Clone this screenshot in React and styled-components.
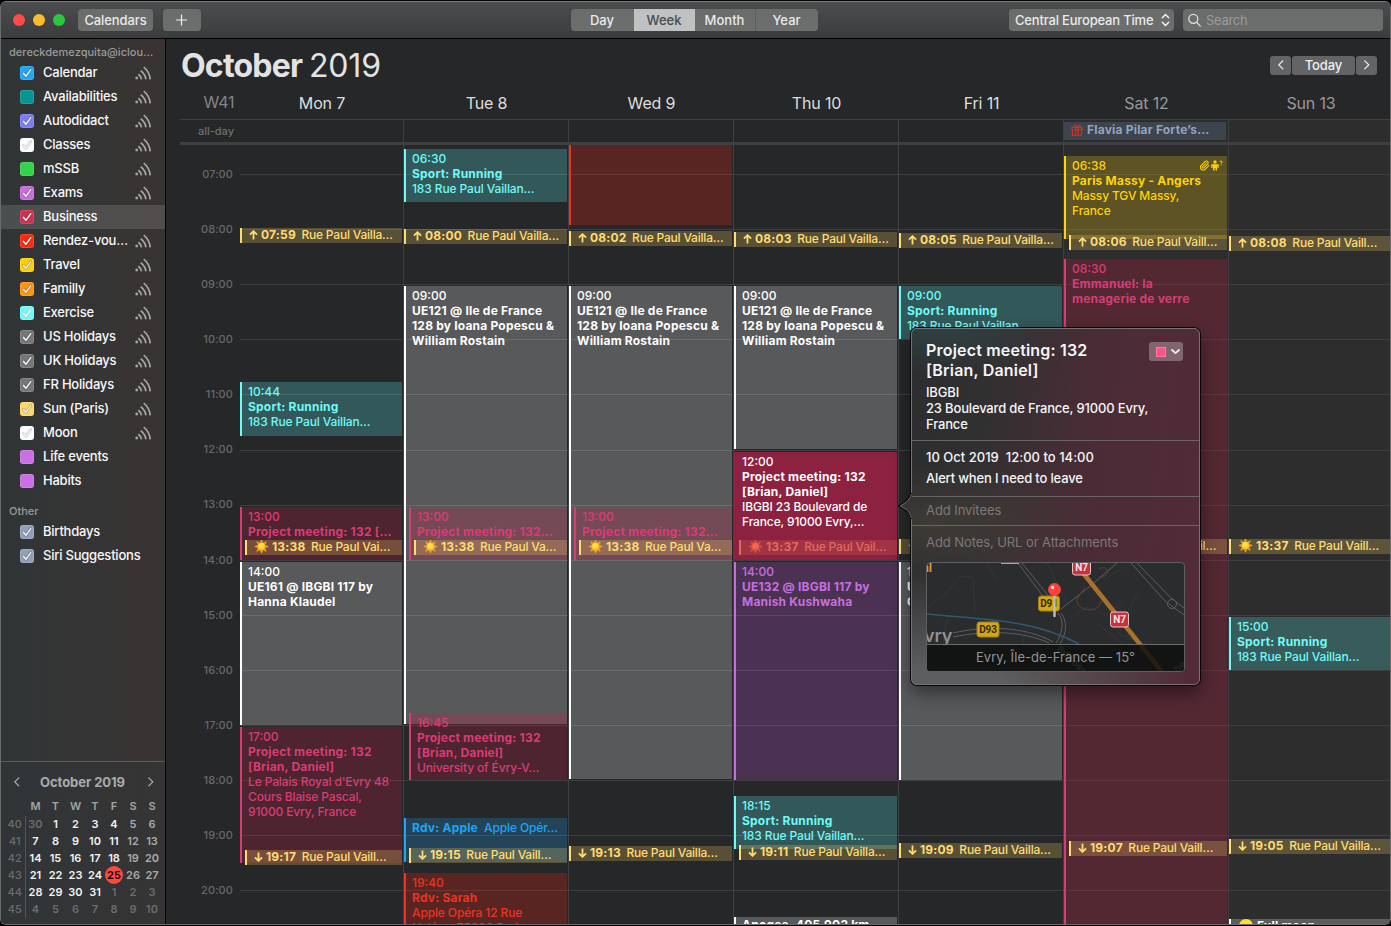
import React from "react";
import styled, { createGlobalStyle, css } from "styled-components";
import { Paperclip } from "lucide-react";

const GlobalStyle = createGlobalStyle`
  * { box-sizing: border-box; }
  html, body { margin: 0; background: #000; }
  body {
    font-family: Inter, "Liberation Sans", sans-serif;
    -webkit-font-smoothing: antialiased;
    overflow: hidden;
  }
`;

/* ---------- palette ---------- */
const tones = {
  sun: { text: "#ffdc72", bar: "#ffdc72", fill: "rgba(255, 214, 100, 0.23)" },
  sport: { text: "#6ffaf6", bar: "#6ffaf6", fill: "rgba(96, 250, 250, 0.23)" },
  white: { text: "#ffffff", bar: "#ffffff", fill: "rgba(255, 255, 255, 0.23)" },
  pink: { text: "#d83c74", bar: "#d83c74", fill: "rgba(212, 24, 75, 0.23)" },
  selected: { text: "#ffffff", bar: "#8f2242", fill: "rgba(143, 33, 65, 0.97)" },
  faded: { text: "#e06a5c", bar: "#e5685a", fill: "rgba(235, 120, 90, 0.22)" },
  red: { text: "#ea3323", bar: "#ea3323", fill: "rgba(255, 35, 12, 0.235)" },
  blue: { text: "#1fa5f3", bar: "#1fa5f3", fill: "rgba(27, 160, 250, 0.23)" },
  purple: { text: "#c66fdf", bar: "#c66fdf", fill: "rgba(205, 85, 220, 0.23)" },
  travel: { text: "#fdd20d", bar: "#fdd20d", fill: "rgba(255, 210, 10, 0.23)" },
};

/* ---------- window ---------- */
const Window = styled.div`
  width: 1391px;
  height: 926px;
  padding: 1px 0 1px;
  background: #000;
`;
const Frame = styled.div`
  display: flex;
  flex-direction: column;
  height: 924px;
  border: 1px solid #6a6b6c;
  border-top-color: #7b7c7d;
  border-radius: 6px;
  overflow: hidden;
  background: #262729;
`;
const TitleBar = styled.header`
  display: grid;
  grid-template-columns: 1fr auto 1fr;
  align-items: center;
  height: 37px;
  flex: none;
  padding: 0 7px 0 4px;
  background: linear-gradient(#4b4c4d, #3b3c3d);
  border-bottom: 1px solid #000;
`;
const BarGroup = styled.div`
  display: flex;
  align-items: center;
  justify-content: ${(p) => (p.$end ? "flex-end" : "flex-start")};
  padding-left: ${(p) => (p.$end ? 0 : 8)}px;
`;
const Light = styled.span`
  width: 12px;
  height: 12px;
  margin-right: 8px;
  border-radius: 50%;
  background: ${(p) => p.$color};
`;
const control = css`
  height: 22px;
  border: 0;
  border-radius: 4px;
  background: linear-gradient(#6a6b6b, #6d6f6e);
  color: #e9eaea;
  font: 500 13px Inter, sans-serif;
  display: flex;
  align-items: center;
`;
const BarButton = styled.button`
  ${control}
  justify-content: center;
  width: ${(p) => p.$w}px;
  padding: 0 0 1px;
  margin-left: ${(p) => p.$ml || 0}px;
  letter-spacing: -0.1px;
`;
const Segments = styled.div`
  display: flex;
  border-radius: 4px;
  overflow: hidden;
  height: 22px;
`;
const Segment = styled.button`
  ${control}
  justify-content: center;
  width: ${(p) => p.$w}px;
  padding: 0;
  border-radius: 0;
  ${(p) => p.$line && "border-left: 1px solid #5c5d5d;"}
  ${(p) => p.$active && "background: #bfc1c3; color: #4a4b4c;"}
`;
const ZoneSelect = styled.button`
  ${control}
  width: 165px;
  padding: 0 4px 0 6px;
  justify-content: space-between;
  letter-spacing: -0.18px;
`;
const SearchField = styled.div`
  ${control}
  width: 200px;
  margin-left: 9px;
  padding: 0 5px;
  gap: 5px;
  color: #9a9b9b;
  font-weight: 400;
  letter-spacing: -0.3px;
`;
const Body = styled.div`
  display: flex;
  flex: 1;
  min-height: 0;
`;

/* ---------- sidebar ---------- */
const Sidebar = styled.aside`
  display: flex;
  flex-direction: column;
  flex: none;
  width: 165px;
  border-right: 1px solid #000;
  background: linear-gradient(90deg, rgba(48, 53, 54, 0.9), rgba(58, 52, 51, 0.9)), #333;
`;
const SideHeading = styled.div`
  height: ${(p) => p.$h}px;
  padding-left: 8px;
  display: flex;
  align-items: center;
  padding-top: ${(p) => p.$pt || 0}px;
  color: #9a9b9b;
  font-size: 11px;
  font-weight: 500;
  letter-spacing: ${(p) => p.$ls || 0}px;
`;
const CalRow = styled.div`
  display: flex;
  align-items: center;
  height: 24px;
  padding: 0 13px 0 19px;
  background: ${(p) => (p.$selected ? "rgba(255,255,255,0.13)" : "none")};
`;
const Check = styled.span`
  display: flex;
  width: 14px;
  height: 14px;
  border-radius: 3px;
  background: ${(p) => p.$color};
  box-shadow: inset 0 0 0 1px rgba(255, 255, 255, 0.12);
`;
const CalName = styled.span`
  flex: 1;
  margin-left: 9px;
  padding-bottom: 2px;
  color: #f8f8f8;
  font-size: 13px;
  font-weight: 500;
  letter-spacing: -0.22px;
  white-space: nowrap;
`;
const MiniCal = styled.section`
  margin-top: auto;
  height: 163px;
  border-top: 1px solid #5a5c5d;
  background: rgba(48, 54, 56, 0.35);
`;
const MiniHead = styled.div`
  display: flex;
  align-items: center;
  justify-content: space-between;
  height: 35px;
  padding: 5px 10px 0 12px;
  color: #a9abab;
`;
const MiniTitle = styled.span`
  margin-right: 3px;
  font-size: 13px;
  font-weight: 700;
  letter-spacing: -0.05px;
`;
const MiniRow = styled.div`
  display: grid;
  grid-template-columns: 24.5px 20px 20px 20px 19px 19px 19px 19px;
  height: 17px;
  align-items: center;
  justify-items: center;
  font-size: 11px;
  font-weight: 600;
  color: #a3a4a5;
  margin-bottom: ${(p) => p.$mb || 0}px;
`;
const MiniDay = styled.span`
  display: flex;
  align-items: center;
  justify-content: center;
  width: 18px;
  height: 18px;
  border-radius: 50%;
  color: ${(p) => p.$color};
  ${(p) => p.$today && "background: #fb4a3f;"}
  ${(p) => p.$week && "width: 25px; height: 17px; padding-left: 4px; border-right: 1px solid #515354; border-radius: 0; font-weight: 500;"}
`;

/* ---------- week view ---------- */
const Main = styled.main`
  display: flex;
  flex-direction: column;
  flex: 1;
  min-width: 0;
  padding-left: 14px;
`;
const TitleRow = styled.div`
  display: flex;
  align-items: flex-start;
  justify-content: space-between;
  height: 48px;
  padding: 7px 13px 0 1px;
`;
const MonthTitle = styled.h1`
  margin: 0;
  color: #e2e3e3;
  font-size: 32px;
  line-height: 40px;
  font-weight: 700;
  letter-spacing: -0.8px;
`;
const Year = styled.span`
  font-weight: 370;
  letter-spacing: -0.15px;
`;
const NavGroup = styled.div`
  display: flex;
  gap: 1px;
  margin-top: 10px;
`;
const NavButton = styled.button`
  display: flex;
  align-items: center;
  justify-content: center;
  width: ${(p) => p.$w}px;
  height: 19px;
  padding: 0 0 1px;
  border: 0;
  border-radius: 3px;
  background: #636466;
  color: #ecedee;
  font: 500 13px Inter, sans-serif;
  letter-spacing: -0.1px;
`;
const weekColumns = css`
  display: grid;
  grid-template-columns: 60px 163px repeat(5, 165px) 162px;
`;
const DayHeads = styled.div`
  ${weekColumns}
  height: 32px;
  align-items: center;
  flex: none;
`;
const DayHead = styled.div`
  text-align: center;
  font-size: 16px;
  letter-spacing: -0.15px;
  color: ${(p) => (p.$dim ? "#98999a" : "#dddede")};
  padding-left: ${(p) => p.$pad}px;
`;
const WeekNo = styled.div`
  padding: 0 6px 2px 0;
  text-align: right;
  font-size: 16px;
  letter-spacing: -0.4px;
  color: #838485;
`;
const AllDay = styled.div`
  ${weekColumns}
  flex: none;
  height: 26px;
  border-top: 1px solid #3e3f41;
  border-bottom: 3px solid #3e3f41;
`;
const AllDayLabel = styled.div`
  padding: 0 6px 0 0;
  text-align: right;
  color: #6e6f71;
  font-size: 11px;
  line-height: 22px;
  font-weight: 500;
`;
const AllDayCell = styled.div`
  padding-top: 2px;
  ${(p) => !p.$first && "border-left: 1px solid #3e3f41;"}
  ${(p) => p.$weekend && "background: #2d2d2d;"}
`;
const Birthday = styled.div`
  display: flex;
  align-items: center;
  gap: 4px;
  height: 18px;
  margin-right: 2px;
  padding: 0 0 3px 7px;
  background: #3e444d;
  color: #93a3bf;
  font-size: 12px;
  font-weight: 700;
  letter-spacing: 0.2px;
  white-space: nowrap;
`;
const WeekGrid = styled.div`
  ${weekColumns}
  flex: 1;
  min-height: 0;
  overflow: hidden;
`;
const HourRail = styled.div`
  display: grid;
  grid-template-rows: repeat(779, 1px);
`;
const HourLabel = styled.span`
  grid-row: ${(p) => p.$y - 7} / span 15;
  grid-column: 1;
  padding-right: 7px;
  text-align: right;
  font-size: 11px;
  line-height: 15px;
  font-weight: 450;
  color: #68696b;
  letter-spacing: 0.1px;
`;
const Day = styled.div`
  display: grid;
  grid-template-columns: minmax(0, 1fr);
  grid-template-rows: repeat(779, 1px);
  ${(p) => !p.$first && "border-left: 1px solid #3e3f41;"}
  ${(p) => p.$weekend && "background: #2d2d2d;"}
`;
const HourLine = styled.i`
  grid-column: 1;
  grid-row: ${(p) => p.$y + 1};
  background: #3e3f41;
`;
const Block = styled.article`
  grid-column: 1;
  grid-row: ${(p) => p.$from + 1} / ${(p) => p.$to + 1};
  margin-left: ${(p) => p.$indent * 5}px;
  margin-right: ${(p) => (p.$last ? 0 : 1)}px;
  padding: ${(p) => (p.$tight ? 0 : 2)}px 0 0 6px;
  border-left: 2px solid ${(p) => tones[p.$tone].bar};
  background: ${(p) => tones[p.$tone].fill};
  background-clip: padding-box;
  color: ${(p) => tones[p.$tone].text};
  font-size: 12px;
  font-weight: 450;
  line-height: 15px;
  letter-spacing: -0.13px;
  overflow: hidden;
  white-space: pre;
`;
const Line = styled.div``;
const Strong = styled.b`
  font-weight: 700;
  letter-spacing: 0.2px;
`;
const TimeLine = styled.div`
  display: flex;
  justify-content: space-between;
  padding-right: 4px;
  letter-spacing: 0;
`;
const Marks = styled.span`
  display: flex;
  align-items: center;
  gap: 1px;
`;
const MoonLine = styled.div`
  display: flex;
  align-items: flex-start;
  gap: 4px;
  margin-top: -1px;
`;
const SunBlock = styled(Block)`
  display: flex;
  align-items: center;
  padding: 0 0 2px 7px;
  letter-spacing: -0.2px;
`;
const SunTime = styled.b`
  margin: 0 5.5px 0 3px;
  font-weight: 700;
  letter-spacing: 0.2px;
`;

/* ---------- popover ---------- */
const Popover = styled.section`
  position: absolute;
  left: 911px;
  top: 328px;
  width: 289px;
  height: 357px;
  border: 1px solid #747275;
  border-radius: 6px;
  color: #f5f5f5;
  box-shadow: 0 0 0 1px #08080a, 0 8px 18px rgba(0, 0, 0, 0.45);
  background:
    radial-gradient(130px 45px at 25px 0, rgba(48, 72, 74, 0.7), rgba(48, 72, 74, 0) 100%),
    radial-gradient(240px 130px at 40px 370px, #5d5e5f 25%, rgba(88, 88, 88, 0) 100%),
    radial-gradient(170px 60px at 20px 195px, rgba(72, 66, 58, 0.6), rgba(72, 66, 58, 0) 100%),
    linear-gradient(97deg, #2c2d2f 0%, #313031 25%, #4a2c36 58%, #532b38 100%);
`;
const Tail = styled.svg`
  position: absolute;
  left: -14px;
  top: 164px;
`;
const PopSection = styled.div`
  height: ${(p) => p.$h}px;
  padding: ${(p) => p.$p};
  ${(p) => p.$line && "border-bottom: 1px solid #6b6466;"}
  font-size: 13px;
  line-height: 16px;
  font-weight: 500;
  letter-spacing: -0.17px;
`;
const PopTitleRow = styled.div`
  display: flex;
  justify-content: space-between;
  align-items: flex-start;
  margin-bottom: 4px;
`;
const PopTitle = styled.h2`
  margin: 0;
  font-size: 16px;
  line-height: 20px;
  font-weight: 600;
  letter-spacing: 0.19px;
`;
const ColorPick = styled.button`
  display: flex;
  align-items: center;
  gap: 5px;
  width: 34px;
  height: 19px;
  margin: 2px 1px 0 0;
  padding: 0 0 0 7px;
  border: 0;
  border-radius: 3px;
  background: #81666f;
`;
const Swatch = styled.span`
  width: 10px;
  height: 10px;
  background: #ff5287;
  border: 1px solid #ff7aa3;
`;
const PopDate = styled.div`
  letter-spacing: 0.02px;
`;
const PopAlert = styled.div`
  margin-top: 5px;
`;
const Hint = styled.div`
  color: #7d7777;
  font-weight: 400;
  letter-spacing: -0.08px;
`;
const MapCard = styled.figure`
  position: relative;
  display: flex;
  flex-direction: column;
  justify-content: flex-end;
  width: 259px;
  height: 110px;
  margin: 12px 0 0;
  border: 1px solid #5d5f60;
  border-radius: 4px;
  overflow: hidden;
  background: #2a2c2e;
`;
const MapArt = styled.svg`
  position: absolute;
  inset: 0;
`;
const MapCaption = styled.figcaption`
  position: relative;
  height: 27px;
  border-top: 1px solid #6a6b6b;
  background: rgba(14, 14, 14, 0.84);
  color: #929393;
  text-align: center;
  font-size: 13px;
  font-weight: 400;
  line-height: 25px;
  letter-spacing: 0.06px;
`;

/* ---------- icons ---------- */
const Chevron = ({ d = "left", size = 8, color = "currentColor", w = 1.5 }) => {
  const paths = { left: "M6.5 1 2 5.5 6.5 10", right: "M2 1 6.5 5.5 2 10", down: "M1 4 4.5 7.2 8 4" };
  return (
    <svg width={size} height={size * 1.22} viewBox="0 0 9 11" fill="none" stroke={color} strokeWidth={w} strokeLinecap="round" strokeLinejoin="round">
      <path d={paths[d]} />
    </svg>
  );
};
const Tick = ({ light }) => (
  <svg width="14" height="14" viewBox="0 0 14 14" fill="none" strokeLinecap="round" strokeLinejoin="round">
    <path d="M3.4 7.4 6 10.2 10.8 3.6" stroke={light ? "#bdbdbd" : "rgba(0,0,0,.35)"} strokeWidth="2.6" />
    <path d="M3.4 7.4 6 10.2 10.8 3.6" stroke="#f3f3f3" strokeWidth="1.6" />
  </svg>
);
const Broadcast = () => (
  <svg width="17" height="14" viewBox="0 0 17 14" fill="none" stroke="#a3a4a4" strokeWidth="1.7">
    <circle cx="1.7" cy="12" r="1.4" fill="#a3a4a4" stroke="none" />
    <path d="M3.300 8.300A7.500 7.500 0 0 1 6.500 13.400M5.800 4.700A13 13 0 0 1 10.900 13.400M8.800 1.200A18 18 0 0 1 15.200 13.400" />
  </svg>
);
const Arrow = ({ up }) => (
  <svg width="9" height="10" viewBox="0 0 9 10" fill="none" stroke="currentColor" strokeWidth="1.8">
    {up ? <path d="M4.5 9.6V1.6M.9 4.7 4.5 1.2 8.1 4.7" /> : <path d="M4.5.4V8.4M.9 5.3 4.5 8.8 8.1 5.3" />}
  </svg>
);
const SunIcon = ({ faded }) => (
  <svg width="15" height="15" viewBox="-7.5 -7.5 15 15">
    {[0, 45, 90, 135, 180, 225, 270, 315].map((a) => (
      <path key={a} d="M-1.500-4.600 0-7.300 1.500-4.600z" fill={faded ? "#c5593c" : "#f0a128"} transform={`rotate(${a})`} />
    ))}
    <circle r="4.300" fill={faded ? "#ee5548" : "#ffc021"} />
    <circle r="2.600" cx="-.3" cy="-.8" fill={faded ? "#f06a55" : "#ffe04a"} />
  </svg>
);
const Gift = () => (
  <svg width="12" height="12" viewBox="0 0 12 12" fill="none" stroke="#e02c20" strokeWidth="1.1">
    <path d="M.8 3.500h10.400v2.300H.8zM1.500 5.800h9v5.500h-9zM4.900 3.500v7.800M7.100 3.500v7.800M6 3.400C4.600 0 2.200.8 3.200 3.200M6 3.400C7.400 0 9.800.8 8.800 3.200" />
  </svg>
);
const Person = () => (
  <svg width="12" height="11" viewBox="0 0 12 11" fill="currentColor">
    <circle cx="4" cy="2" r="1.700" />
    <path d="M.3 4.300H7.700V8H6.400V6.200H6V10.500H4.500V8H3.500V10.500H2V6.200H1.600V8H.3z" />
    <path d="M8.800 2C8.800.6 11.200.6 11.200 2 11.200 2.900 10 2.900 10 4M10 4.600v.9" fill="none" stroke="currentColor" strokeWidth=".9" />
  </svg>
);

/* ---------- data ---------- */
const calendars = [
  ["Calendar", "#1fa7f8", 1, 1],
  ["Availabilities", "#089494", 0, 1],
  ["Autodidact", "#7c7df3", 1, 1],
  ["Classes", "#fcfcfc", 2, 1],
  ["mSSB", "#35d24c", 0, 1],
  ["Exams", "#c86ddd", 1, 1],
  ["Business", "#cf304f", 1, 0],
  ["Rendez-vou…", "#fc2b0d", 1, 1],
  ["Travel", "#fdd00b", 1, 1],
  ["Familly", "#fd950d", 1, 1],
  ["Exercise", "#6efbfc", 2, 1],
  ["US Holidays", "#767778", 1, 1],
  ["UK Holidays", "#767778", 1, 1],
  ["FR Holidays", "#767778", 1, 1],
  ["Sun (Paris)", "#fdd76b", 1, 1],
  ["Moon", "#fcfcfc", 2, 1],
  ["Life events", "#cb70e2", 0, 0],
  ["Habits", "#cb70e2", 0, 0],
];
const others = [
  ["Birthdays", "#90a0bb", 1, 0],
  ["Siri Suggestions", "#90a0bb", 1, 0],
];

/* Top edge of the visible time range, in page pixels. */
const TOP = 145;
const hours = [174, 229, 284, 339, 394, 450, 505, 560, 615, 670, 725, 780, 835, 890].map((y, i) => ({
  y: y - TOP,
  labelY: y - TOP - (i === 5 || i === 6 ? 1 : 0),
  label: `${String(i + 7).padStart(2, "0")}:00`,
}));

const ev = (tone, from, to, time, title = [], place = [], indent = 0, extra = {}) => ({
  tone, from: from - TOP, to: to - TOP, time, title, place, indent, ...extra,
});
const sun = (from, icon, time, place, indent = 0, tone = "sun") => ({
  tone, from: from - TOP, to: from + 15 - TOP, icon, time, place, indent, isSun: true,
});
const sport = (from, to, time) => ev("sport", from, to, time, ["Sport: Running"], ["183 Rue Paul Vaillan…"]);
const lecture = (to) => ev("white", 286, to, "09:00", ["UE121 @ Ile de France", "128 by Ioana Popescu &", "William Rostain"]);

const days = [
  {
    name: "Mon 7",
    events: [
      sun(228, "up", "07:59", "Rue Paul Vailla…"),
      sport(382, 436, "10:44"),
      ev("pink", 507, 560, "13:00", ["Project meeting: 132 […"]),
      sun(540, "sun", "13:38", "Rue Paul Vai…", 1),
      ev("white", 562, 725, "14:00", ["UE161 @ IBGBI 117 by", "Hanna Klaudel"]),
      ev("pink", 727, 863, "17:00", ["Project meeting: 132", "[Brian, Daniel]"], ["Le Palais Royal d'Evry 48", "Cours Blaise Pascal,", "91000 Evry, France"]),
      sun(850, "down", "19:17", "Rue Paul Vaill…", 1),
    ],
  },
  {
    name: "Tue 8",
    events: [
      sport(149, 202, "06:30"),
      sun(229, "up", "08:00", "Rue Paul Vailla…"),
      lecture(724),
      ev("pink", 507, 560, "13:00", ["Project meeting: 132…"], [], 1),
      sun(540, "sun", "13:38", "Rue Paul Va…", 2),
      ev("pink", 713, 780, "16:45", ["Project meeting: 132", "[Brian, Daniel]"], ["University of Évry-V…"], 1),
      ev("blue", 818, 862, null, [], [], 0, { inline: ["Rdv: Apple", "Apple Opér…"] }),
      sun(848, "down", "19:15", "Rue Paul Vaill…", 1),
      ev("red", 873, 924, "19:40", ["Rdv: Sarah"], ["Apple Opéra 12 Rue", "Halévy, 75009 Paris,"]),
    ],
  },
  {
    name: "Wed 9",
    events: [
      ev("red", 145, 225, null),
      sun(231, "up", "08:02", "Rue Paul Vailla…"),
      lecture(779),
      ev("pink", 507, 560, "13:00", ["Project meeting: 132…"], [], 1),
      sun(540, "sun", "13:38", "Rue Paul Va…", 2),
      sun(846, "down", "19:13", "Rue Paul Vailla…"),
    ],
  },
  {
    name: "Thu 10",
    events: [
      sun(232, "up", "08:03", "Rue Paul Vailla…"),
      lecture(449),
      ev("selected", 452, 560, "12:00", ["Project meeting: 132", "[Brian, Daniel]"], ["IBGBI 23 Boulevard de", "France, 91000 Evry,…"]),
      sun(540, "sun", "13:37", "Rue Paul Vail…", 1, "faded"),
      ev("purple", 562, 780, "14:00", ["UE132 @ IBGBI 117 by", "Manish Kushwaha"]),
      sport(796, 849, "18:15"),
      sun(845, "down", "19:11", "Rue Paul Vailla…", 1),
      ev("white", 917, 924, null, ["Apogee, 405,902 km"], [], 0, { tight: true }),
    ],
  },
  {
    name: "Fri 11",
    events: [
      sun(233, "up", "08:05", "Rue Paul Vailla…"),
      sport(286, 339, "09:00"),
      sun(539, "sun", "13:37", "Rue Paul Vail…"),
      ev("white", 562, 780, "14:00", ["UE132 @ IBGBI 117", "Cours"]),
      sun(843, "down", "19:09", "Rue Paul Vailla…"),
    ],
  },
  {
    name: "Sat 12",
    weekend: true,
    events: [
      ev("travel", 156, 239, "06:38", ["Paris Massy - Angers"], ["Massy TGV Massy,", "France"], 0, { marks: true }),
      sun(235, "up", "08:06", "Rue Paul Vaill…", 1),
      ev("pink", 259, 924, "08:30", ["Emmanuel: la", "menagerie de verre"]),
      sun(539, "sun", "13:37", "Rue Paul Vail…", 1),
      sun(841, "down", "19:07", "Rue Paul Vaill…", 1),
    ],
  },
  {
    name: "Sun 13",
    weekend: true,
    events: [
      sun(236, "up", "08:08", "Rue Paul Vaill…"),
      sun(539, "sun", "13:37", "Rue Paul Vaill…"),
      sport(617, 670, "15:00"),
      sun(839, "down", "19:05", "Rue Paul Vailla…"),
      ev("white", 919, 924, null, [], [], 0, { moon: true, tight: true }),
    ],
  },
];

const weeks = [
  [40, 30, 1, 2, 3, 4, 5, 6],
  [41, 7, 8, 9, 10, 11, 12, 13],
  [42, 14, 15, 16, 17, 18, 19, 20],
  [43, 21, 22, 23, 24, 25, 26, 27],
  [44, 28, 29, 30, 31, 1, 2, 3],
  [45, 4, 5, 6, 7, 8, 9, 10],
];
const miniColor = (r, c) => {
  const n = weeks[r][c];
  if (c === 0 || (r === 0 && n === 30) || (r >= 4 && n < 11)) return "#6b6d6e";
  if (n === 25) return "#180000";
  return c > 5 ? "#a9abab" : "#f2f2f2";
};

/* ---------- parts ---------- */
function CalendarRow({ item: [name, color, tick, feed] }) {
  return (
    <CalRow $selected={name === "Business"}>
      <Check $color={color}>{tick > 0 && <Tick light={tick === 2} />}</Check>
      <CalName>{name}</CalName>
      {feed > 0 && <Broadcast />}
    </CalRow>
  );
}

function Event({ e, last }) {
  const box = { $tone: e.tone, $from: e.from, $to: e.to, $indent: e.indent, $last: last, $tight: e.tight };
  if (e.isSun) {
    return (
      <SunBlock {...box}>
        {e.icon === "sun" ? <SunIcon faded={e.tone === "faded"} /> : <Arrow up={e.icon === "up"} />}
        <SunTime>{e.time}</SunTime>
        {e.place}
      </SunBlock>
    );
  }
  return (
    <Block {...box}>
      {e.time && (
        <TimeLine>
          {e.time}
          {e.marks && (
            <Marks>
              <Paperclip size={11} strokeWidth={2.3} />
              <Person />
            </Marks>
          )}
        </TimeLine>
      )}
      {e.title.map((t) => (
        <Line key={t}>
          <Strong>{t}</Strong>
        </Line>
      ))}
      {e.place.map((t) => (
        <Line key={t}>{t}</Line>
      ))}
      {e.inline && (
        <Line>
          <Strong>{e.inline[0]}</Strong>
          {"  " + e.inline[1]}
        </Line>
      )}
      {e.moon && (
        <MoonLine>
          <svg width="16" height="15" viewBox="0 0 16 15">
            <circle cx="9" cy="8" r="7" fill="#ffdf2e" />
          </svg>
          <Strong>Full moon</Strong>
        </MoonLine>
      )}
    </Block>
  );
}

const Shield = ({ x, y, label, kind, w }) => (
  <g transform={`translate(${x} ${y})`}>
    <rect width={w} height="15" rx="2.500" fill={kind === "red" ? "#c9303c" : "#d3a616"} stroke={kind === "red" ? "#e8c7ca" : "#a37f0e"} strokeWidth="1" />
    <text x={w / 2} y="11" textAnchor="middle" fontSize="10" fontWeight="700" fontFamily="Roboto, sans-serif" fill={kind === "red" ? "#f3e4e5" : "#33290a"}>
      {label}
    </text>
  </g>
);

function TownMap() {
  return (
    <MapArt width="257" height="108" viewBox="0 0 257 108" fill="none">
      <g stroke="#34373a" strokeWidth="1">
        <path d="M0 44 17 32 33 14H46L48 50M20 56 12 108M60 0 70 18M120 0 140 40M148 52 160 44 178 52 196 38M170 60 220 100M210 30 190 70 240 90M176 18 196 4M100 60 90 108" />
      </g>
      <g stroke="#5c5f62" strokeWidth="1">
        <path d="M91 0 121 40M95 0 124 36M134 46 162 24 190 0M131 50C138 58 135 72 129 80M134 50C142 60 138 74 132 82M204 0 238 38 257 52M210 0 243 34 257 45M26 70C60 62 100 64 126 79M26 74C60 67 96 68 122 80" />
        <circle cx="245" cy="41" r="4.500" />
      </g>
      <path d="M150 36C148 48 172 52 174 38M158 24 150 36M172 6C182 0 184 16 172 14" stroke="#693d33" />
      <path d="M0 51C60 57 104 56 152 81" stroke="#315873" strokeWidth="1.500" />
      <path d="M156 10 236 110" stroke="#a9712f" strokeWidth="4.500" />
      <path d="M74-.5H92" stroke="#e0a040" strokeWidth="3" />
      <text x="-5" y="9" fontSize="12" fontWeight="700" fontFamily="Inter" fill="#d99a35">al</text>
      <text x="-3" y="79" fontSize="18" fontWeight="600" fontFamily="Inter" fill="#8f9192">vry</text>
      <text x="129" y="87" fontSize="10" fontWeight="700" fontFamily="Inter" fill="#8a8b8b" transform="rotate(42 129 87)">Bd Foss</text>
      <text x="250" y="110" fontSize="10" fontWeight="700" fontFamily="Inter" fill="#8a8b8b" transform="rotate(-40 250 110)">he</text>
      <Shield x={145.500} y={-3} w={18} label="N7" kind="red" />
      <Shield x={183.500} y={49} w={18} label="N7" kind="red" />
      <Shield x={50} y={59} w={22} label="D93" />
      <Shield x={111.500} y={33} w={21} label="D91" />
      <path d="M127.500 33V53" stroke="#b9babb" strokeWidth="2.500" strokeLinecap="round" />
      <circle cx="127.500" cy="26.500" r="6.500" fill="#ff4238" />
      <circle cx="125.500" cy="24.500" r="1.700" fill="#ffd6d2" />
    </MapArt>
  );
}

function EventPopover() {
  return (
    <Popover>
      <Tail width="14" height="26" viewBox="0 0 14 26">
        <path d="M14 0C12 4 11 6 8 8.500L1 13 8 17C11 19.500 12 22 14 26z" fill="#383634" />
        <path d="M13.500 0C12 4 11 6 8 8.500L1 13 8 17C11 19.500 12 22 13.500 26" fill="none" stroke="#0a0a0a" strokeWidth="2" />
        <path d="M13.500 1C12 5 11 6.500 8.500 9L2.300 13 8.500 16.500C11 19 12 21 13.500 25" fill="none" stroke="#747275" strokeWidth="1" />
      </Tail>
      <PopSection $h={112} $line $p="11px 15px 0 14px">
        <PopTitleRow>
          <PopTitle>
            Project meeting: 132
            <br />
            [Brian, Daniel]
          </PopTitle>
          <ColorPick>
            <Swatch />
            <Chevron d="down" size={9} color="#f3eef0" w={1.8} />
          </ColorPick>
        </PopTitleRow>
        IBGBI
        <br />
        23 Boulevard de France, 91000 Evry,
        <br />
        France
      </PopSection>
      <PopSection $h={56} $line $p="8px 14px 0">
        <PopDate>10 Oct 2019&nbsp; 12:00 to 14:00</PopDate>
        <PopAlert>Alert when I need to leave</PopAlert>
      </PopSection>
      <PopSection $h={29} $line $p="5px 14px 0">
        <Hint>Add Invitees</Hint>
      </PopSection>
      <PopSection $h={150} $p="8px 14px 0">
        <Hint>Add Notes, URL or Attachments</Hint>
        <MapCard>
          <TownMap />
          <MapCaption>Evry, Île-de-France — 15°</MapCaption>
        </MapCard>
      </PopSection>
    </Popover>
  );
}

export default function App() {
  return (
    <>
      <GlobalStyle />
      <Window>
        <Frame>
          <TitleBar>
            <BarGroup>
              <Light $color="#fc4b48" />
              <Light $color="#fdbc2f" />
              <Light $color="#2ac840" />
              <BarButton $w={75} $ml={5}>Calendars</BarButton>
              <BarButton $w={38} $ml={10}>
                <svg width="12" height="12" viewBox="0 0 12 12" stroke="#eee" strokeWidth="1.200">
                  <path d="M5.500 .5v11M0 6h11" />
                </svg>
              </BarButton>
            </BarGroup>
            <Segments>
              <Segment $w={63}>Day</Segment>
              <Segment $w={61} $active>Week</Segment>
              <Segment $w={60}>Month</Segment>
              <Segment $w={63} $line>Year</Segment>
            </Segments>
            <BarGroup $end>
              <ZoneSelect>
                Central European Time
                <svg width="9" height="14" viewBox="0 0 9 14" fill="none" stroke="#f0f0f0" strokeWidth="1.500" strokeLinecap="round" strokeLinejoin="round">
                  <path d="M1.300 4.700 4.500 1.500 7.700 4.700M1.300 9.300 4.500 12.500 7.700 9.300" />
                </svg>
              </ZoneSelect>
              <SearchField>
                <svg width="13" height="14" viewBox="0 0 13 14" fill="none" stroke="#dededf" strokeWidth="1.300" strokeLinecap="round">
                  <circle cx="5.300" cy="5.800" r="4.500" />
                  <path d="m8.600 9.200 3.700 3.900" />
                </svg>
                Search
              </SearchField>
            </BarGroup>
          </TitleBar>
          <Body>
            <Sidebar>
              <SideHeading $h={22} $pt={4} $ls={0.03}>dereckdemezquita@iclou…</SideHeading>
              {calendars.map((c) => (
                <CalendarRow key={c[0]} item={c} />
              ))}
              <SideHeading $h={27} $pt={9}>Other</SideHeading>
              {others.map((c) => (
                <CalendarRow key={c[0]} item={c} />
              ))}
              <MiniCal>
                <MiniHead>
                  <Chevron size={8} />
                  <MiniTitle>October 2019</MiniTitle>
                  <Chevron d="right" size={8} />
                </MiniHead>
                <MiniRow $mb={1}>
                  <span />
                  {["M", "T", "W", "T", "F", "S", "S"].map((d, i) => (
                    <span key={i}>{d}</span>
                  ))}
                </MiniRow>
                {weeks.map((w, r) => (
                  <MiniRow key={w[0]}>
                    {w.map((n, c) => (
                      <MiniDay key={c} $week={c === 0} $today={n === 25} $color={miniColor(r, c)}>
                        {n}
                      </MiniDay>
                    ))}
                  </MiniRow>
                ))}
              </MiniCal>
            </Sidebar>
            <Main>
              <TitleRow>
                <MonthTitle>
                  October <Year>2019</Year>
                </MonthTitle>
                <NavGroup>
                  <NavButton $w={21} aria-label="Previous week"><Chevron size={8} /></NavButton>
                  <NavButton $w={63}>Today</NavButton>
                  <NavButton $w={21} aria-label="Next week"><Chevron d="right" size={8} /></NavButton>
                </NavGroup>
              </TitleRow>
              <DayHeads>
                <WeekNo>W41</WeekNo>
                {days.map((d, i) => (
                  <DayHead key={d.name} $pad={i === 0 ? 1 : i === 6 ? 4 : 2} $dim={d.weekend}>{d.name}</DayHead>
                ))}
              </DayHeads>
              <AllDay>
                <AllDayLabel>all-day</AllDayLabel>
                {days.map((d, i) => (
                  <AllDayCell key={d.name} $first={i === 0} $weekend={d.weekend}>
                    {i === 5 && (
                      <Birthday>
                        <Gift />
                        Flavia Pilar Forte’s…
                      </Birthday>
                    )}
                  </AllDayCell>
                ))}
              </AllDay>
              <WeekGrid>
                <HourRail>
                  {hours.map((h) => (
                    <HourLabel key={h.label} $y={h.labelY + 1}>{h.label}</HourLabel>
                  ))}
                </HourRail>
                {days.map((d, i) => (
                  <Day key={d.name} $first={i === 0} $weekend={d.weekend}>
                    {hours.map((h) => (
                      <HourLine key={h.label} $y={h.y} />
                    ))}
                    {d.events.map((e, k) => (
                      <Event key={k} e={e} last={i === 6} />
                    ))}
                  </Day>
                ))}
              </WeekGrid>
            </Main>
          </Body>
        </Frame>
      </Window>
      <EventPopover />
    </>
  );
}
